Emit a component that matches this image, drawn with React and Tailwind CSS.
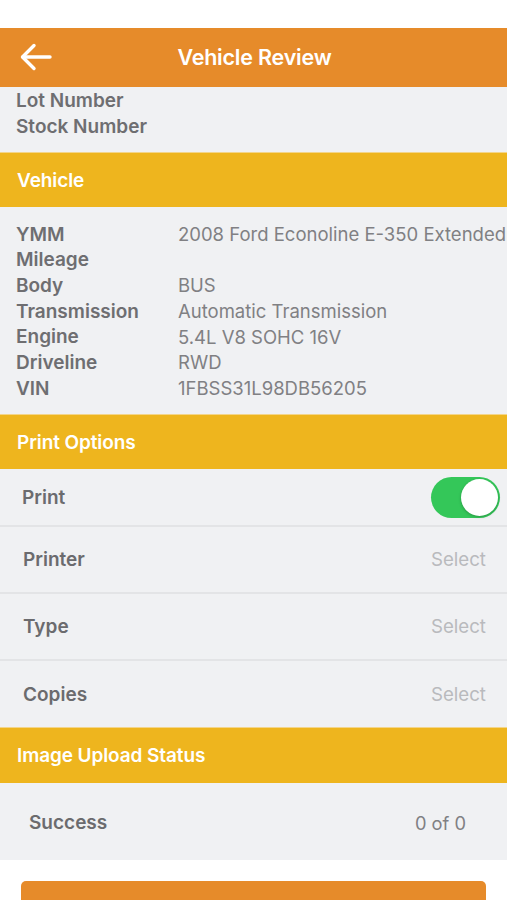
import React from "react";

const rows = [
  ["YMM", "2008 Ford Econoline E-350 Extended"],
  ["Mileage", ""],
  ["Body", "BUS"],
  ["Transmission", "Automatic Transmission"],
  ["Engine", "5.4L V8 SOHC 16V"],
  ["Driveline", "RWD"],
  ["VIN", "1FBSS31L98DB56205"],
];

function SectionHeader({ title, h = "h-[55px]" }) {
  return (
    <div className={`${h} bg-[#EEB51E] flex items-center px-[17px] pt-[2px] border-t border-[#f3d58a]`}>
      <span className="text-white text-[19px] font-semibold tracking-[-0.1px]">{title}</span>
    </div>
  );
}

function SelectRow({ label, border = true }) {
  return (
    <div
      className={
        border
          ? "h-[67px] flex items-center justify-between pl-[23px] pr-[21px] pt-[2px] border-b-2 border-[#e3e4e6]"
          : "h-[66px] flex items-center justify-between pl-[23px] pr-[21px] pt-[2px]"
      }
    >
      <span className="text-[19px] font-semibold text-[#6b6b6e]">{label}</span>
      <span className="text-[18.7px] text-[#b9babd]">Select</span>
    </div>
  );
}

export default function App() {
  return (
    <div
      className="w-[507px] h-[900px] overflow-hidden bg-white"
      style={{ fontFamily: "Inter, 'Noto Sans', sans-serif" }}
    >
      <div className="h-[28px] bg-white" />
      <div className="h-[59px] bg-[#E68B2A] relative flex items-center justify-center">
        <svg
          className="absolute left-[20px] top-[15px]"
          width="32"
          height="28"
          viewBox="0 0 32 28"
          fill="none"
          stroke="white"
          strokeWidth="3.4"
          strokeLinecap="round"
          strokeLinejoin="round"
        >
          <path d="M30 14H3" />
          <path d="M14 2.5L2.5 14L14 25.5" />
        </svg>
        <span className="text-white text-[21.5px] font-semibold tracking-[-0.2px] pl-[2px]">Vehicle Review</span>
      </div>
      <div className="h-[65px] bg-[#F0F1F3] px-[16px] pt-[1px] flex flex-col">
        <span className="text-[19px] leading-[26px] font-semibold text-[#6e6e71]">Lot Number</span>
        <span className="text-[19px] leading-[26px] font-semibold text-[#6e6e71]">Stock Number</span>
      </div>
      <SectionHeader title="Vehicle" />
      <div className="h-[207px] bg-[#F0F1F3] px-[16px] pt-[15px] overflow-hidden">
        {rows.map(([k, v]) => (
          <div key={k} className="flex h-[25.7px] items-center">
            <span className="w-[162px] shrink-0 text-[19px] font-semibold text-[#6e6e71]">{k}</span>
            <span className="text-[18.5px] text-[#808083] whitespace-nowrap">{v}</span>
          </div>
        ))}
      </div>
      <SectionHeader title="Print Options" />
      <div className="bg-[#F0F1F3]">
        <div className="h-[58px] flex items-center justify-between pl-[22px] pr-[7px] border-b-2 border-[#e3e4e6]">
          <span className="text-[19px] font-semibold text-[#6b6b6e] pt-[2px]">Print</span>
          <div className="w-[69px] h-[41px] rounded-full bg-[#34C759] relative">
            <div className="absolute right-[2px] top-[2px] w-[37px] h-[37px] rounded-full bg-white shadow-[0_1px_3px_rgba(0,0,0,0.25)]" />
          </div>
        </div>
        <SelectRow label="Printer" />
        <SelectRow label="Type" />
        <SelectRow label="Copies" border={false} />
      </div>
      <SectionHeader title="Image Upload Status" h="h-[56px]" />
      <div className="h-[77px] bg-[#F0F1F3] flex items-center justify-between pl-[29px] pr-[41px] pt-[4px]">
        <span className="text-[19px] font-semibold text-[#6b6b6e]">Success</span>
        <span className="text-[18.3px] text-[#808083]">0 of 0</span>
      </div>
      <div className="pt-[21px] px-[21px]">
        <div className="h-[50px] rounded-[5px] bg-[#E68B2A]" />
      </div>
    </div>
  );
}
